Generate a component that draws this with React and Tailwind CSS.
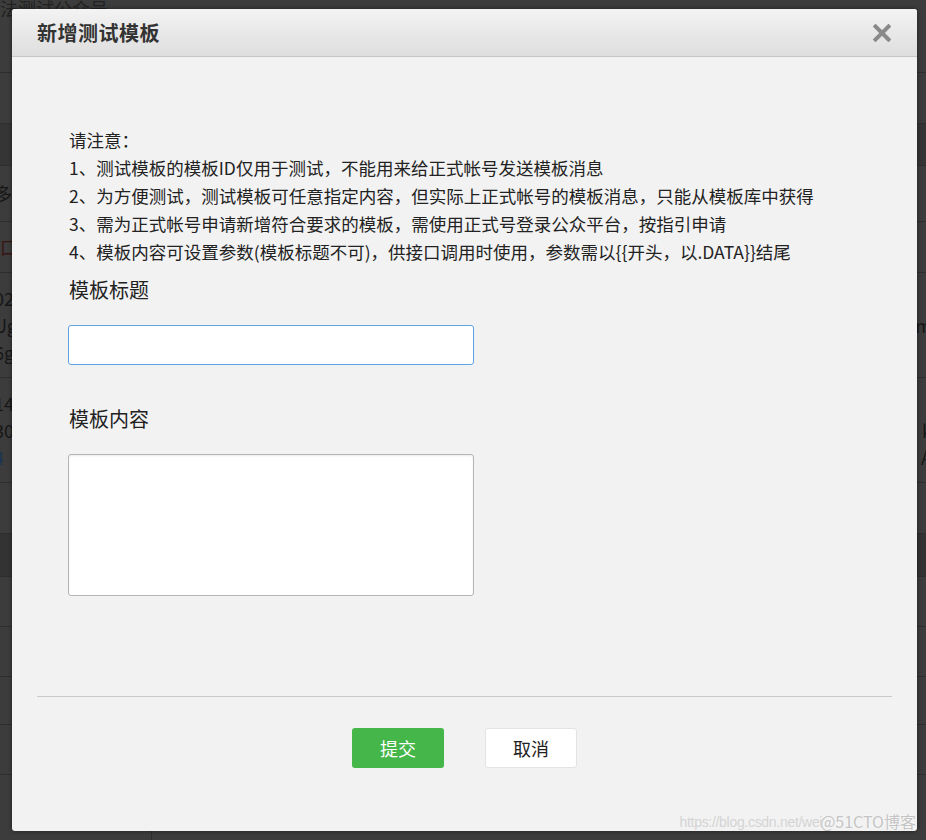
import React from "react";

const font = { fontFamily: '"Noto Sans CJK SC", "Noto Sans", sans-serif' };

function BgRow({ h, cls = "", left, right }) {
  return (
    <div className={`flex items-stretch justify-between border-b border-[#2e2e2e] ${h} ${cls}`}>
      <div className="flex flex-col justify-center text-[18px] leading-[27px] text-[#161616] -ml-[6px]">{left}</div>
      <div className="flex flex-col justify-center text-[18px] leading-[27px] text-[#161616] -mr-[6px] text-right">{right}</div>
    </div>
  );
}

export default function App() {
  return (
    <div className="relative w-[926px] h-[840px] overflow-hidden bg-[#3c3c3c]" style={font}>
      {/* dimmed background page */}
      <div className="flex flex-col">
        <BgRow h="h-[73px]" left={<span className="-mt-[56px] ml-[6px] text-[#222]">法测试公众号</span>} />
        <BgRow h="h-[51px]" />
        <BgRow h="h-[42px]" cls="bg-[#353535]" />
        <BgRow h="h-[56px]" left={<span>多</span>} />
        <BgRow h="h-[51px]" left={<span className="ml-[6px] text-[#3a1414]">口</span>} />
        <BgRow
          h="h-[105px]"
          left={<><span>02</span><span>Ug</span><span>6g</span></>}
          right={<><span>&nbsp;</span><span>m</span><span>&nbsp;</span></>}
        />
        <BgRow
          h="h-[105px]"
          left={<><span>14</span><span>30</span><span className="text-[#1b3552]">4</span></>}
          right={<><span className="text-[#1b3552]">-</span><span>k</span><span>A</span></>}
        />
        <BgRow h="h-[51px]" />
        <BgRow h="h-[43px]" cls="bg-[#333333]" />
        <BgRow h="h-[50px]" />
        <BgRow h="h-[50px]" />
        <BgRow h="h-[48px]" />
        <BgRow h="h-[50px]" />
        <div className="flex h-[65px]">
          <div className="w-[152px] border-r border-[#2e2e2e]" />
        </div>
      </div>

      {/* dialog */}
      <div className="absolute left-[12px] top-[9px] w-[905px] h-[822px] flex flex-col bg-[#f2f2f2] rounded-[3px] shadow-[0_0_4px_rgba(0,0,0,0.5)] overflow-hidden">
        <div className="h-[48px] shrink-0 flex items-center justify-between pl-[25px] pr-[26px] bg-gradient-to-b from-[#f3f3f3] to-[#dedede] border-b border-[#c6c6c6]">
          <span className="text-[20px] font-bold text-[#333] tracking-[0.5px]">新增测试模板</span>
          <svg width="18" height="18" viewBox="0 0 18 18" className="mt-[1px]">
            <path d="M2.5 2.5 L15.5 15.5 M15.5 2.5 L2.5 15.5" stroke="#8a8a8a" strokeWidth="4" strokeLinecap="square" />
          </svg>
        </div>

        <div className="flex-1 flex flex-col pl-[56px] pt-[69px]">
          <div className="text-[17.5px] leading-[28px] text-[#222] pl-[1px]">
            <p>请注意：</p>
            <p>1、测试模板的模板ID仅用于测试，不能用来给正式帐号发送模板消息</p>
            <p>2、为方便测试，测试模板可任意指定内容，但实际上正式帐号的模板消息，只能从模板库中获得</p>
            <p>3、需为正式帐号申请新增符合要求的模板，需使用正式号登录公众平台，按指引申请</p>
            <p>4、模板内容可设置参数(模板标题不可)，供接口调用时使用，参数需以{"{{"}开头，以.DATA{"}}"}结尾</p>
          </div>
          <label className="mt-[10px] text-[20px] leading-[28px] text-[#222] pl-[1px]">模板标题</label>
          <input
            type="text"
            className="mt-[21px] w-[406px] h-[40px] bg-white border border-[#5ea3e6] rounded-[3px] outline-none px-2"
          />
          <label className="mt-[40px] text-[20px] leading-[28px] text-[#222] pl-[1px]">模板内容</label>
          <textarea
            className="mt-[21px] w-[406px] h-[142px] bg-white border border-[#b5b5b5] rounded-[3px] outline-none resize-none p-2 shadow-[inset_0_1px_2px_rgba(0,0,0,0.08)]"
          />
        </div>

        <div className="mx-[25px] border-t border-[#c9c9c9]" />
        <div className="h-[134px] shrink-0 flex justify-center gap-[41px] pt-[31px]">
          <button className="w-[92px] h-[40px] rounded-[3px] bg-[#45b649] text-white text-[18px]">提交</button>
          <button className="w-[92px] h-[40px] rounded-[3px] bg-white border border-[#e3e3e3] text-[#222] text-[18px]">取消</button>
        </div>

        <div className="absolute right-[1px] bottom-[2px] flex items-end leading-none">
          <span className="text-[14px] text-[#d4d4d4] tracking-[-0.3px]" style={{ fontFamily: '"Liberation Sans", sans-serif' }}>https://blog.csdn.net/wei</span>
          <span className="text-[16px] text-[#c4c4c4] -ml-[2px] [text-shadow:0_0_2px_#fff]">@51CTO博客</span>
        </div>
      </div>
    </div>
  );
}
